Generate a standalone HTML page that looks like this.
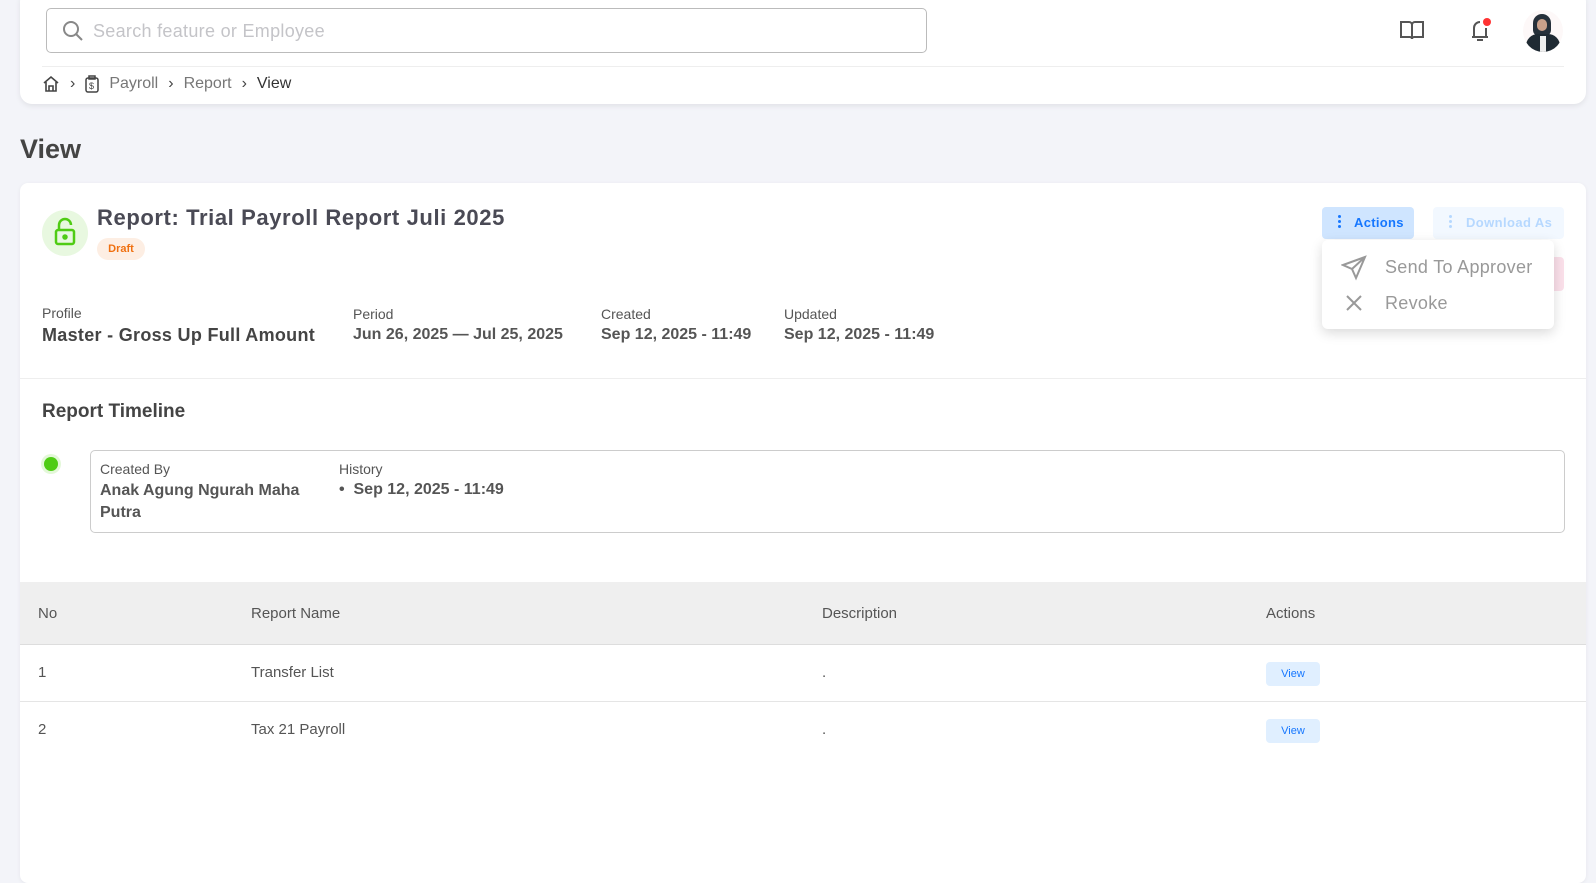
<!DOCTYPE html>
<html><head><meta charset="utf-8"><style>
*{box-sizing:border-box;margin:0;padding:0}
body{width:1596px;height:861px;background:#f3f4f9;font-family:"Liberation Sans",sans-serif;color:#4a4a55;position:relative;overflow:hidden}
.abs{position:absolute}
.hdr{left:20px;top:-10px;width:1566px;height:114px;background:#fff;border-radius:12px;box-shadow:0 2px 6px rgba(0,0,0,.08)}
.search{left:46px;top:8px;width:881px;height:45px;border:1px solid #bbb;border-radius:5px;}
.search span{position:absolute;left:46px;top:12px;font-size:18px;color:#c4c4c8;letter-spacing:.3px}
.card{left:20px;top:183px;width:1566px;height:700px;background:#fff;border-radius:8px;box-shadow:0 1px 4px rgba(0,0,0,.06)}
.lbl{font-size:14px;color:#555}
.val{font-size:17px;font-weight:bold;color:#555}
</style></head><body>
<div class="abs hdr"></div>
<div class="abs search">
<svg class="abs" style="left:14px;top:10px" width="24" height="24" viewBox="0 0 24 24" fill="none" stroke="#888" stroke-width="2"><circle cx="10" cy="10" r="7"/><path d="M15 15l6 6"/></svg>
<span>Search feature or Employee</span></div>
<svg class="abs" style="left:1399px;top:18px" width="26" height="24" viewBox="0 0 26 24" fill="none" stroke="#555" stroke-width="2"><path d="M2 4h8a3 3 0 0 1 3 3v14a2 2 0 0 0-2-2H2zM24 4h-8a3 3 0 0 0-3 3v14a2 2 0 0 1 2-2h9z"/></svg>
<svg class="abs" style="left:1466px;top:16px" width="28" height="28" viewBox="0 0 28 28" fill="none" stroke="#555" stroke-width="2"><path d="M6 21h16M8 21V12a6 6 0 0 1 6-6M20 12v9M11 24h6"/><circle cx="21" cy="6" r="4" fill="#f33" stroke="none"/></svg>
<div class="abs" style="left:1523px;top:10px;width:40px;height:42px;border-radius:50%;background:#fdf8f8;overflow:hidden">
<div class="abs" style="left:10px;top:4px;width:18px;height:22px;border-radius:9px 9px 6px 6px;background:#26303a"></div>
<div class="abs" style="left:14px;top:9px;width:10px;height:12px;border-radius:5px;background:#c9a08a"></div>
<div class="abs" style="left:3px;top:24px;width:34px;height:22px;border-radius:12px 12px 0 0;background:#1f2a33"></div>
<div class="abs" style="left:17px;top:26px;width:6px;height:18px;background:#eee"></div></div>
<div class="abs" style="left:42px;top:66px;width:1522px;height:1px;background:#eee"></div>
<div class="abs" style="left:42px;top:75px;font-size:16px;color:#777;display:flex;align-items:center;gap:10px">
<svg width="18" height="18" viewBox="0 0 18 18" fill="none" stroke="#444" stroke-width="1.6"><path d="M2 8l7-6 7 6M4 7v9h10V7M7 16v-5h4v5"/></svg><span style="color:#444">›</span>
<svg width="14" height="18" viewBox="0 0 14 18" fill="none" stroke="#444" stroke-width="1.5"><rect x="1" y="3" width="12" height="14" rx="2"/><rect x="4" y="1" width="6" height="3"/><text x="4" y="14" font-size="9" fill="#444" stroke="none">$</text></svg>
<span>Payroll</span><span style="color:#444">›</span><span>Report</span><span style="color:#444">›</span><span style="color:#333">View</span></div>
<div class="abs" style="left:20px;top:134px;font-size:27px;font-weight:bold;color:#444">View</div>

<div class="abs card"></div>
<div class="abs" style="left:42px;top:210px;width:46px;height:46px;border-radius:50%;background:#e8f8e0"></div>
<svg class="abs" style="left:53px;top:217px" width="24" height="30" viewBox="0 0 24 30" fill="none" stroke="#4fcc14" stroke-width="2.5"><path d="M6 13V8a6 6 0 0 1 12 0"/><rect x="3" y="13" width="18" height="14" rx="2"/><circle cx="12" cy="20" r="1.5" fill="#4fcc14"/></svg>
<div class="abs" style="left:97px;top:205px;font-size:22px;font-weight:bold;color:#4a4a55;letter-spacing:.6px">Report: Trial Payroll Report Juli 2025</div>
<div class="abs" style="left:97px;top:238px;width:48px;height:22px;border-radius:11px;background:#fdeee3;color:#f07010;font-size:11px;font-weight:bold;text-align:center;line-height:22px">Draft</div>

<div class="abs" style="left:1322px;top:207px;width:92px;height:32px;border-radius:4px;background:#cfe5ff;color:#1677ff;font-size:13px;font-weight:bold;line-height:32px;padding-left:32px;letter-spacing:.3px">Actions</div>
<div class="abs" style="left:1338px;top:215px;width:3px;height:3px;border-radius:50%;background:#1677ff;box-shadow:0 5px #1677ff,0 10px #1677ff"></div>
<div class="abs" style="left:1433px;top:207px;width:131px;height:32px;border-radius:4px;background:#f2f8ff;color:#b6d8ff;font-size:13px;font-weight:bold;line-height:32px;padding-left:33px;letter-spacing:.4px">Download As</div>
<div class="abs" style="left:1449px;top:215px;width:3px;height:3px;border-radius:50%;background:#b6d8ff;box-shadow:0 5px #b6d8ff,0 10px #b6d8ff"></div>
<div class="abs" style="left:1540px;top:257px;width:24px;height:34px;border-radius:4px;background:#fbe0ea"></div>
<div class="abs" style="left:1322px;top:240px;width:232px;height:89px;background:#fff;border-radius:6px;box-shadow:0 4px 12px rgba(0,0,0,.15)"></div>
<svg class="abs" style="left:1341px;top:255px" width="26" height="26" viewBox="0 0 26 26" fill="none" stroke="#999" stroke-width="2"><path d="M24 2L2 10l9 4 4 9zM24 2L11 14"/></svg>
<div class="abs" style="left:1385px;top:257px;font-size:18px;color:#999;letter-spacing:.3px">Send To Approver</div>
<svg class="abs" style="left:1345px;top:294px" width="18" height="18" viewBox="0 0 18 18" stroke="#999" stroke-width="2"><path d="M2 2l14 14M16 2L2 16"/></svg>
<div class="abs" style="left:1385px;top:293px;font-size:18px;color:#999;letter-spacing:.3px">Revoke</div>

<div class="abs lbl" style="left:42px;top:305px">Profile</div>
<div class="abs val" style="left:42px;top:325px;font-size:18px;color:#444;letter-spacing:.3px">Master - Gross Up Full Amount</div>
<div class="abs lbl" style="left:353px;top:306px">Period</div>
<div class="abs val" style="left:353px;top:326px;font-size:16px">Jun 26, 2025 — Jul 25, 2025</div>
<div class="abs lbl" style="left:601px;top:306px">Created</div>
<div class="abs val" style="left:601px;top:326px;font-size:16px">Sep 12, 2025 - 11:49</div>
<div class="abs lbl" style="left:784px;top:306px">Updated</div>
<div class="abs val" style="left:784px;top:326px;font-size:16px">Sep 12, 2025 - 11:49</div>
<div class="abs" style="left:20px;top:378px;width:1566px;height:1px;background:#eee"></div>
<div class="abs" style="left:42px;top:401px;font-size:19px;font-weight:bold;color:#444">Report Timeline</div>
<div class="abs" style="left:44px;top:457px;width:14px;height:14px;border-radius:50%;background:#4fcc14;box-shadow:0 0 0 3px #e3f8d8"></div>
<div class="abs" style="left:90px;top:450px;width:1475px;height:83px;border:1px solid #ccc;border-radius:5px"></div>
<div class="abs lbl" style="left:100px;top:461px">Created By</div>
<div class="abs val" style="left:100px;top:480px;font-size:16px;line-height:22px;width:220px">Anak Agung Ngurah Maha Putra</div>
<div class="abs lbl" style="left:339px;top:461px">History</div>
<div class="abs val" style="left:339px;top:481px;font-size:16px">•&nbsp;&nbsp;Sep 12, 2025 - 11:49</div>

<div class="abs" style="left:20px;top:582px;width:1566px;height:63px;background:#efefef;border-bottom:1px solid #ddd"></div>
<div class="abs" style="left:38px;top:605px;font-size:15px;color:#555">No</div>
<div class="abs" style="left:251px;top:605px;font-size:15px;color:#555">Report Name</div>
<div class="abs" style="left:822px;top:605px;font-size:15px;color:#555">Description</div>
<div class="abs" style="left:1266px;top:605px;font-size:15px;color:#555">Actions</div>
<div class="abs" style="left:20px;top:701px;width:1566px;height:1px;background:#e5e5e5"></div>
<div class="abs" style="left:38px;top:664px;font-size:15px;color:#555">1</div>
<div class="abs" style="left:251px;top:664px;font-size:15px;color:#555">Transfer List</div>
<div class="abs" style="left:822px;top:664px;font-size:15px;color:#555">.</div>
<div class="abs" style="left:1266px;top:662px;width:54px;height:24px;border-radius:4px;background:#e0efff;color:#1677ff;font-size:11px;text-align:center;line-height:24px">View</div>
<div class="abs" style="left:38px;top:721px;font-size:15px;color:#555">2</div>
<div class="abs" style="left:251px;top:721px;font-size:15px;color:#555">Tax 21 Payroll</div>
<div class="abs" style="left:822px;top:721px;font-size:15px;color:#555">.</div>
<div class="abs" style="left:1266px;top:719px;width:54px;height:24px;border-radius:4px;background:#e0efff;color:#1677ff;font-size:11px;text-align:center;line-height:24px">View</div>
</body></html>
